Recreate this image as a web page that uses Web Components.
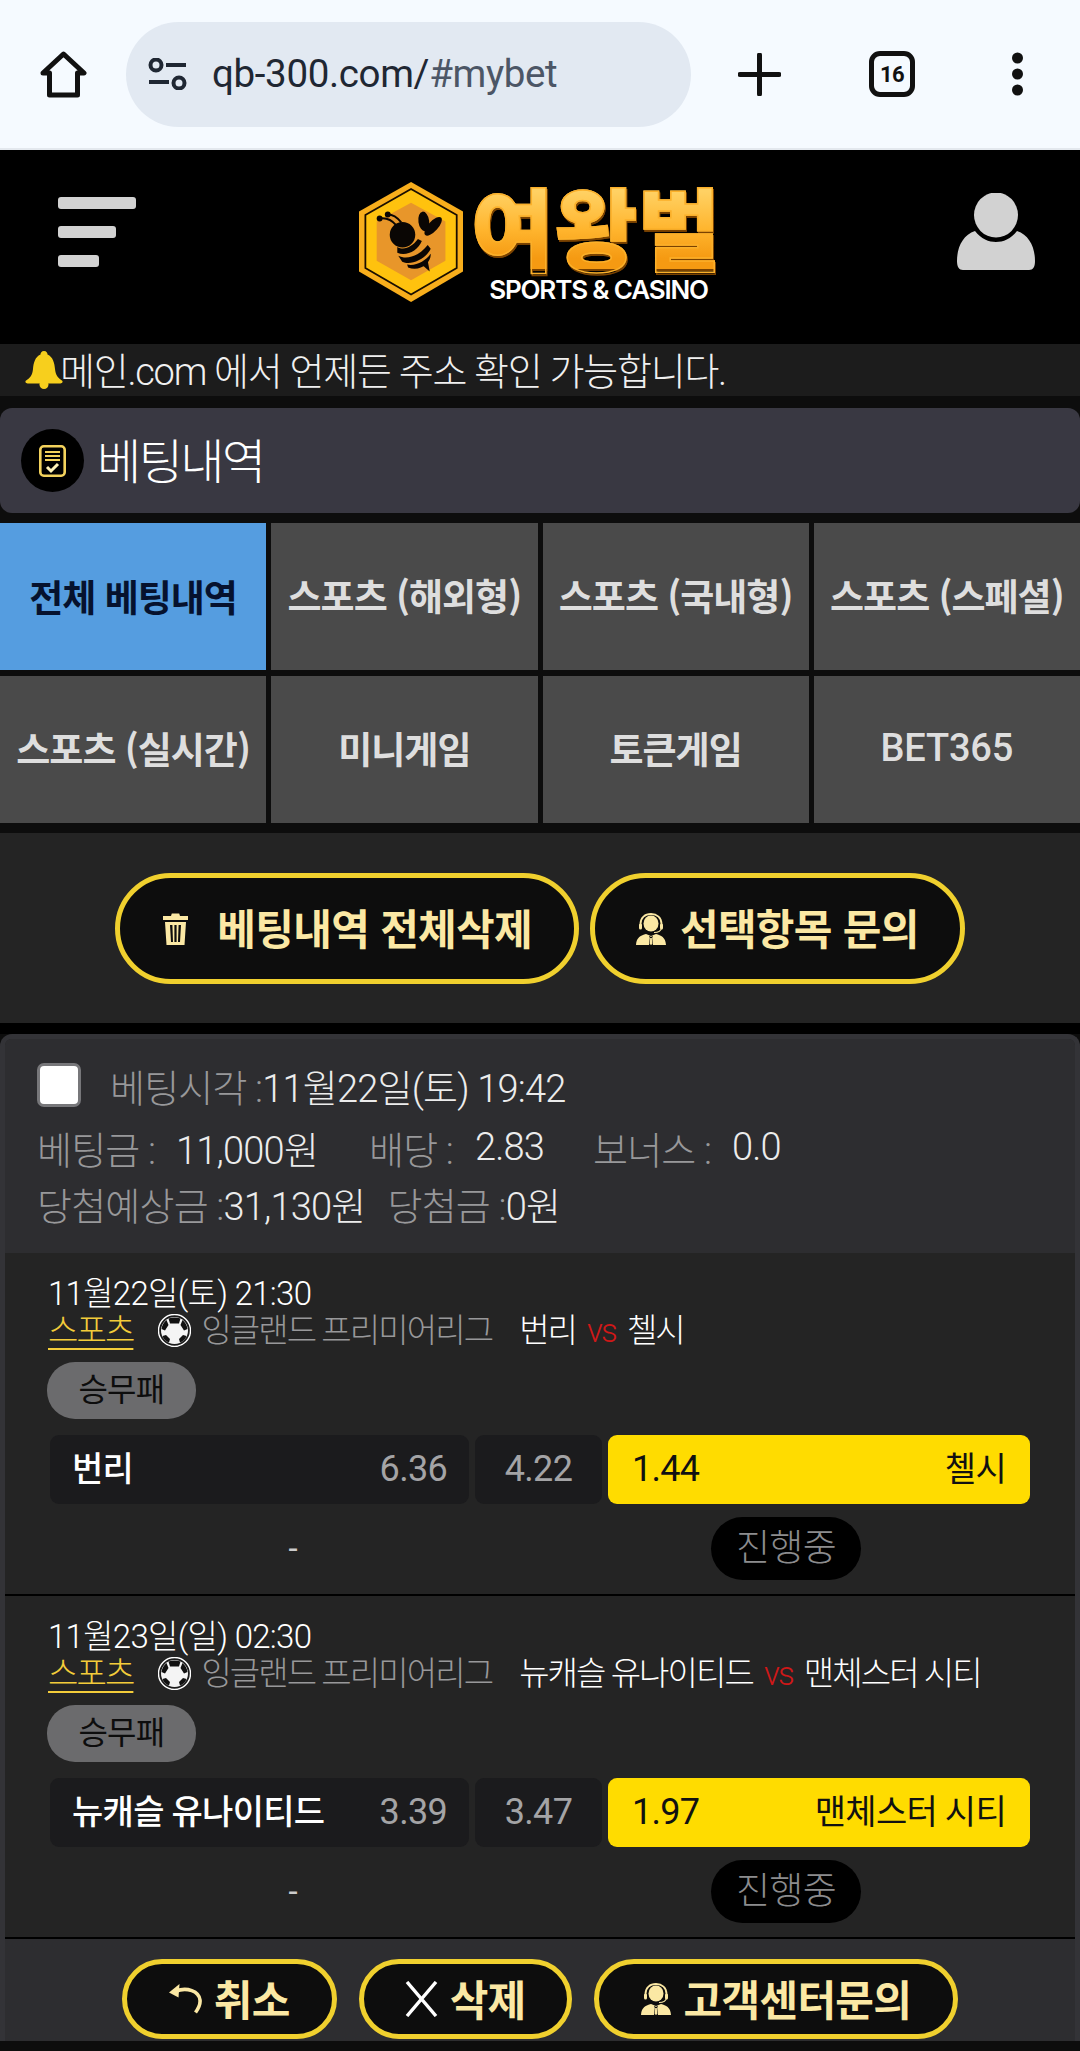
<!DOCTYPE html>
<html lang="ko">
<head>
<meta charset="utf-8">
<title>베팅내역</title>
<style>
  html, body { margin: 0; padding: 0; background: #0d0d0d; }
  body { width: 1080px; height: 2051px; overflow: hidden; font-family: Roboto, "Noto Sans CJK KR", sans-serif; }
</style>
</head>
<body>
<browser-bar url="qb-300.com/" hash="#mybet" tabs="16"></browser-bar>
<site-header></site-header>
<notice-bar>메인.com 에서 언제든 주소 확인 가능합니다.</notice-bar>
<page-title>베팅내역</page-title>
<bet-tabs></bet-tabs>
<action-panel>
  <action-button style="--gap:28px;--pad:42px" icon="trash">베팅내역 전체삭제</action-button>
  <action-button style="--gap:14px;--pad:41px" icon="agent">선택항목 문의</action-button>
</action-panel>
<bet-card>
  <bet-match date="11월22일(토) 21:30" home="번리" away="첼시" home-odds="6.36" draw="4.22" away-odds="1.44"></bet-match>
  <bet-match date="11월23일(일) 02:30" home="뉴캐슬 유나이티드" away="맨체스터 시티" home-odds="3.39" draw="3.47" away-odds="1.97"></bet-match>
  <action-button slot="footer" style="--gap:12px;--pad:42px" size="small" icon="undo">취소</action-button>
  <action-button slot="footer" style="--gap:12px;--pad:41px" size="small" icon="close">삭제</action-button>
  <action-button slot="footer" style="--gap:13px;--pad:42px" size="small" icon="agent">고객센터문의</action-button>
</bet-card>

<script>
const icons = {
  trash: `<svg width="27" height="32" viewBox="0 0 27 32" fill="currentColor"><path d="M9 3 L9.8 0.5 H17.2 L18 3 H26 V7 H1 V3 Z"/><path fill-rule="evenodd" d="M3 9 H24 L22.5 32 H4.5 Z M8 12 L9 29 H11 L10.4 12 Z M12.4 12 V29 H14.6 V12 Z M16.6 12 L16 29 H18 L19 12 Z"/></svg>`,
  agent: `<svg width="30" height="32" viewBox="0 0 30 32"><path d="M4.5 15 V11 C4.5 4.5 9 1 15 1 C21 1 25.500 4.5 25.500 11 V15" fill="none" stroke="currentColor" stroke-width="1.800"/><rect x="3" y="10.500" width="3" height="6" rx="1.500" fill="currentColor"/><rect x="24" y="10.500" width="3" height="6" rx="1.500" fill="currentColor"/><ellipse cx="15" cy="10.500" rx="7.500" ry="8" fill="currentColor"/><path d="M10 21 C5 22.500 0.500 24 0 32 H30 C29.500 24 25 22.500 20 21 L15 23 Z" fill="currentColor"/><path d="M13 22.500 L15 24 L17 22.500 L16.200 25 L17 32 H13 L13.800 25 Z" fill="#0d0d0d"/><path d="M14.200 25 H15.800 L16.300 31 L15 32 L13.700 31 Z" fill="currentColor"/><path d="M25.500 15 C25 18 22 19.500 18 19.500" fill="none" stroke="currentColor" stroke-width="1.200"/></svg>`,
  undo: `<svg width="33" height="30" viewBox="0 0 33 30" fill="none" stroke="currentColor" stroke-width="3.600"><path d="M7 7 C18 3 30 7 31 16 C31.500 20 29 25 26.500 28.500"/><path fill="currentColor" stroke="none" d="M0 8.500 L10.500 0 L9.500 13.500 Z"/></svg>`,
  close: `<svg width="33" height="36" viewBox="0 0 33 36" fill="none" stroke="#fff" stroke-width="3.4"><path d="M2 1 L31 35 M31 1 L2 35"/></svg>`
}

class BrowserBar extends HTMLElement {
  constructor(){
    super()
    this.attachShadow({ mode: "open" }).innerHTML = `
    <style>
      :host { display: flex; align-items: center; height: 150px; box-sizing: border-box; background: #f5faff; border-bottom: 2px solid #e3e8ee; }
      .home { margin-left: 40px; width: 47px; height: 47px; }
      .pill { margin-left: 39px; width: 565px; height: 105px; box-sizing: border-box; border-radius: 53px; background: #e2e9f2; display: flex; align-items: center; padding-left: 22px; flex: none; }
      .url { margin-left: 25px; padding-bottom: 1px; font: 400 38.500px Roboto, sans-serif; color: #1f2733; white-space: nowrap; letter-spacing: -.35px; }
      .url span { color: #4c5666; }
      .plus { margin-left: 47px; }
      .tabs { margin-left: 88px; width: 46px; height: 46px; box-sizing: border-box; border: 5px solid #111; border-radius: 11px; display: flex; align-items: center; justify-content: center; font: 700 22px Roboto, sans-serif; color: #111; letter-spacing: -.5px; }
      .more { margin-left: 97px; }
    </style>
    <svg class="home" viewBox="0 0 47 47" fill="none" stroke="#111" stroke-width="5" stroke-linejoin="round"><path d="M23.5 3 L44 22 H37.5 V44 H9.5 V22 H3 Z"/></svg>
    <div class="pill">
      <svg width="39" height="32" viewBox="0 0 39 32" fill="none" stroke="#1f2733" stroke-width="4"><circle cx="8" cy="7" r="5.5"/><path d="M18 7 H38 M1 24 H21"/><circle cx="31" cy="25" r="5.5"/></svg>
      <div class="url">${this.getAttribute("url")}<span>${this.getAttribute("hash")}</span></div>
    </div>
    <svg class="plus" width="43" height="43" viewBox="0 0 43 43" stroke="#111" stroke-width="5" stroke-linecap="round"><path d="M21.5 2 V41 M2 21.5 H41"/></svg>
    <div class="tabs">${this.getAttribute("tabs")}</div>
    <svg class="more" width="11" height="44" viewBox="0 0 11 44" fill="#111"><circle cx="5.5" cy="6" r="5.5"/><circle cx="5.5" cy="22" r="5.5"/><circle cx="5.5" cy="38" r="5.5"/></svg>`
  }
}
customElements.define("browser-bar", BrowserBar)

class SiteHeader extends HTMLElement {
  constructor(){
    super()
    this.attachShadow({ mode: "open" }).innerHTML = `
    <style>
      :host { display: flex; align-items: flex-start; height: 194px; background: #000; box-sizing: border-box; }
      .menu { margin: 47px 0 0 58px; width: 78px; display: flex; flex-direction: column; gap: 17px; }
      .menu i { display: block; height: 12px; background: #d2d2d2; border-radius: 3px; }
      .logo { margin: 31px 0 0 223px; display: flex; gap: 8px; width: 362px; }
      .word { display: flex; flex-direction: column; align-items: center; width: 250px; }
      .name { font: 900 90px/88px "Noto Sans CJK KR", sans-serif; letter-spacing: .5px; height: 88px; white-space: nowrap;
        background: linear-gradient(#ffd163 12%, #ffb52e 55%, #f59a12 88%); -webkit-background-clip: text; background-clip: text; color: transparent;
        -webkit-text-stroke: 1.5px #fbb02a; filter: drop-shadow(1px 2px 0 #7a4200); }
      .sub { font: 600 26px/26px Inter, sans-serif; color: #fff; letter-spacing: -1.15px; white-space: nowrap; margin: 8px 0 0 5px; }
      .user { margin: 43px 0 0 236px; }
    </style>
    <div class="menu"><i></i><i style="width:58px"></i><i style="width:41px"></i></div>
    <div class="logo">
      <svg width="106" height="122" viewBox="0 0 106 122">
        <path d="M53 0 L106 30 V91 L53 122 L0 91 V30 Z" fill="#f8ae1c"/>
        <path d="M53 7 L99.500 33.500 V87.500 L53 114.500 L6.500 87.500 V33.500 Z" fill="#ffc20e" stroke="#1a0e00" stroke-width="1.800"/>
        <path d="M53 21 L88 40 V80 L53 100 L18 80 V40 Z" fill="#e8962a"/>
        <g fill="#0a0604">
          <circle cx="44.300" cy="53.700" r="13"/>
          <ellipse cx="66" cy="40" rx="5.500" ry="10" transform="rotate(-8 66 40)"/>
          <ellipse cx="75.500" cy="45" rx="5" ry="12" transform="rotate(42 75.500 45)"/>
          <circle cx="21" cy="37" r="3"/><circle cx="29.300" cy="33" r="3"/>
          <path d="M39 66 C46 70 54 66 60 58 L64 60 C60 70 48 76 39 72 Z"/>
          <path d="M40 75 C50 80 62 74 70 64 L73 68 C70 76 54 86 44 81 Z"/>
          <path d="M49 84 C58 86 68 80 73 73 C74 82 62 92 50 87 Z"/>
          <path d="M65 85 L72 91 L70 80 Z"/>
        </g>
        <path d="M21 37 C27 36 33 38 38 44 M29.300 33 C35 33 39 36 43 41" stroke="#0a0604" stroke-width="2" fill="none"/>
      </svg>
      <div class="word"><div class="name">여왕벌</div><div class="sub">SPORTS &amp; CASINO</div></div>
    </div>
    <svg class="user" width="78" height="77" viewBox="0 0 78 77" fill="#d2d2d2"><ellipse cx="39" cy="22" rx="22" ry="22.5"/><path d="M18 38 C24 46 32 49 39 49 C46 49 54 46 60 38 C72 42 78 54 78 68 C78 74 76 77 72 77 H6 C2 77 0 74 0 68 C0 54 6 42 18 38 Z"/></svg>`
  }
}
customElements.define("site-header", SiteHeader)

class NoticeBar extends HTMLElement {
  constructor(){
    super()
    this.attachShadow({ mode: "open" }).innerHTML = `
    <style>
      :host { display: flex; align-items: center; height: 52px; box-sizing: border-box; padding: 0 0 3px 25px; background: #1c1c1c; margin-bottom: 12px; font: 300 38px Roboto, "Noto Sans CJK KR", sans-serif; color: #f0f0f0; white-space: nowrap; letter-spacing: -1.25px; }
      svg { flex: none; margin: 3px -3px 0 0; }
    </style>
    <svg width="38" height="38" viewBox="0 0 38 38" fill="#f7cf1d"><path d="M19 0 C21.5 0 22.5 2 22.5 3.5 C28 6 29.5 12 30 18 C30.5 24 33 27 37.5 30 C38 32 36 32.5 34 32.5 H4 C2 32.5 0 32 0.5 30 C5 27 7.5 24 8 18 C8.5 12 10 6 15.5 3.5 C15.5 2 16.5 0 19 0 Z"/><circle cx="19" cy="33.5" r="4.5"/></svg>
    <slot></slot>`
  }
}
customElements.define("notice-bar", NoticeBar)

class PageTitle extends HTMLElement {
  constructor(){
    super()
    this.attachShadow({ mode: "open" }).innerHTML = `
    <style>
      :host { display: flex; align-items: center; height: 105px; box-sizing: border-box; background: #393842; border-radius: 12px; padding-left: 21px; margin-bottom: 10px; font: 300 48px Roboto, "Noto Sans CJK KR", sans-serif; color: #fff; letter-spacing: -2.5px; }
      .badge { width: 63px; height: 63px; border-radius: 50%; background: #000; display: flex; align-items: center; justify-content: center; margin-right: 13px; }
      .text { padding-bottom: 5px; }
    </style>
    <div class="badge">
      <svg width="27" height="32" viewBox="0 0 27 32" fill="none" stroke="#f3d25c" stroke-width="2.6"><rect x="1.3" y="1.3" width="24.4" height="29.4" rx="3.5"/><path d="M6 7 H21 M6 11 H21 M6 15 H21" stroke-width="2"/><path d="M8 22 L12 26 L19 19" stroke-width="3" stroke="#fff3b8"/></svg>
    </div>
    <div class="text"><slot></slot></div>`
  }
}
customElements.define("page-title", PageTitle)

class BetTabs extends HTMLElement {
  constructor(){
    super()
    const names = ["전체 베팅내역", "스포츠 (해외형)", "스포츠 (국내형)", "스포츠 (스페셜)", "스포츠 (실시간)", "미니게임", "토큰게임", "BET365"]
    this.attachShadow({ mode: "open" }).innerHTML = `
    <style>
      :host { display: grid; grid-template-columns: repeat(4, 1fr); grid-auto-rows: 147px; gap: 6px 5px; margin-bottom: 10px; font: 700 37px "Noto Sans CJK KR", sans-serif; color: #dedede; }
      div { background: #4a4a4a; display: flex; align-items: center; justify-content: center; white-space: nowrap; letter-spacing: -1px; padding-bottom: 4px; box-sizing: border-box; }
      .on { background: #559de0; color: #06122e; padding-bottom: 2px; }
      .latin { font-family: Roboto, sans-serif; font-weight: 500; font-size: 38px; letter-spacing: -.2px; padding-bottom: 3px; }
    </style>
    ${names.map((n, i) => `<div class="${i == 0 ? "on" : i == 7 ? "latin" : ""}">${n}</div>`).join("")}`
  }
}
customElements.define("bet-tabs", BetTabs)

class ActionPanel extends HTMLElement {
  constructor(){
    super()
    this.attachShadow({ mode: "open" }).innerHTML = `
    <style>
      :host { display: flex; justify-content: center; gap: 11px; box-sizing: border-box; height: 201px; padding-top: 40px; background: #242424; border-bottom: 11px solid #000; }
    </style>
    <slot></slot>`
  }
}
customElements.define("action-panel", ActionPanel)

class ActionButton extends HTMLElement {
  constructor(){
    super()
    const small = this.getAttribute("size") == "small"
    this.attachShadow({ mode: "open" }).innerHTML = `
    <style>
      :host { display: inline-flex; align-items: center; gap: var(--gap, 14px); box-sizing: border-box; height: ${small ? 80 : 111}px; padding: 0 var(--pad, 43px); border: 5px solid #f0d02e; border-radius: 56px; background: #0d0d0d; color: #fbe8a4; font: 700 42px "Noto Sans CJK KR", sans-serif; white-space: nowrap; letter-spacing: -.7px; }
      svg { display: block; flex: none; }
      .text { padding-bottom: 4px; }
    </style>
    ${icons[this.getAttribute("icon")]}
    <div class="text"><slot></slot></div>`
  }
}
customElements.define("action-button", ActionButton)

class BetCard extends HTMLElement {
  constructor(){
    super()
    this.attachShadow({ mode: "open" }).innerHTML = `
    <style>
      :host { display: block; box-sizing: border-box; border: 5px solid #333337; border-bottom: 0; border-radius: 12px 12px 0 0; background: #242424; font: 300 38px Roboto, "Noto Sans CJK KR", sans-serif; color: #ececec; letter-spacing: -.8px; }
      .head { background: #2d2d30; height: 214px; box-sizing: border-box; padding: 24px 0 0 32px; border-radius: 6px 6px 0 0; }
      .row { display: flex; align-items: center; height: 56px; white-space: nowrap; }
      .row.first { height: 44px; margin-bottom: 12px; }
      .box { width: 44px; height: 44px; box-sizing: border-box; background: #fff; border: 3px solid #77777a; border-radius: 7px; margin-right: 29px; }
      .k { color: #98989a; }
      .foot { display: flex; justify-content: center; gap: 22px; height: 102px; box-sizing: border-box; padding-top: 20px; background: #2d2d30; }
    </style>
    <div class="head">
      <div class="row first"><div class="box"></div><span class="k">베팅시각 :</span>11월22일(토) 19:42</div>
      <div class="row"><span class="k" style="width:139px">베팅금 :</span><span style="width:193px">11,000원</span><span class="k" style="width:106px">배당 :</span><span style="width:118px">2.83</span><span class="k" style="width:139px">보너스 :</span><span>0.0</span></div>
      <div class="row"><span class="k">당첨예상금 :</span><span style="margin-right:22px">31,130원</span><span class="k">당첨금 :</span>0원</div>
    </div>
    <slot></slot>
    <div class="foot"><slot name="footer"></slot></div>`
  }
}
customElements.define("bet-card", BetCard)

class BetMatch extends HTMLElement {
  constructor(){
    super()
    const a = n => this.getAttribute(n)
    this.attachShadow({ mode: "open" }).innerHTML = `
    <style>
      :host { display: block; box-sizing: border-box; padding: 23px 0 14px 0; border-bottom: 2px solid #000; font: 300 33px/35px Roboto, "Noto Sans CJK KR", sans-serif; color: #fff; letter-spacing: -.7px; }
      .date, .info { padding-left: 43px; white-space: nowrap; }
      .info { display: flex; align-items: center; height: 38px; letter-spacing: -1.9px; }
      .sport { color: #f3cc3a; text-decoration: underline; text-underline-offset: 6px; text-decoration-thickness: 2px; margin-right: 25px; }
      .info svg { margin-right: 10px; flex: none; }
      .league { color: #98989a; margin-right: 27px; }
      .vs { color: #d01818; margin: 0 11px; }
      .type { display: flex; align-items: center; justify-content: center; width: 149px; height: 57px; margin: 13px 0 16px 42px; border-radius: 28px; background: #6b6b6d; color: #0d0d0d; font-size: 32px; font-weight: 400; }
      .odds { display: grid; grid-template-columns: 419px 127px 422px; gap: 6px; margin-left: 45px; height: 69px; }
      .cell { display: flex; align-items: center; justify-content: space-between; background: #1b1b1d; border-radius: 9px; padding: 0 22px; font-size: 36px; font-weight: 400; color: #a4a4a6; white-space: nowrap; }
      .cell b { font-weight: 400; color: #fff; font-size: 34px; }
      .mid { justify-content: center; padding: 0; }
      .sel { background: #ffdc00; color: #111; padding-right: 24px; padding-left: 24px; }
      .sel b { color: #111; font-weight: 400; }
      .state { display: flex; align-items: center; margin-top: 13px; height: 63px; }
      .dash { width: 292px; text-align: right; color: #ccc; font-weight: 400; }
      .pill { margin-left: 414px; width: 150px; height: 63px; border-radius: 32px; background: #000; color: #8c8c8e; font-size: 37px; display: flex; align-items: center; justify-content: center; }
    </style>
    <div class="date">${a("date")}</div>
    <div class="info"><span class="sport">스포츠</span>
      <svg width="33" height="33" viewBox="0 0 33 33"><circle cx="16.500" cy="16.500" r="16" fill="#1c1c1c" stroke="#fff" stroke-width="1.400"/><circle cx="16.500" cy="16.500" r="13.500" fill="#f4f4f4"/><path fill="#111" d="M10.500 4.500 C14 3 19 3 22.500 4.500 L21 9.500 H12 Z M3.500 15 C4 11 6 8 8.500 6 L10.500 11 L7 16.500 Z M29.500 15 C29 11 27 8 24.500 6 L22.500 11 L26 16.500 Z M8 21 L12 25 L11 28.500 C8 27.500 5.500 25 4.500 22 Z M25 21 L21 25 L22 28.500 C25 27.500 27.500 25 28.500 22 Z"/></svg>
      <span class="league">잉글랜드 프리미어리그</span>${a("home")}<span class="vs">vs</span>${a("away")}</div>
    <div class="type">승무패</div>
    <div class="odds">
      <div class="cell"><b style="font-weight:500">${a("home")}</b>${a("home-odds")}</div>
      <div class="cell mid">${a("draw")}</div>
      <div class="cell sel">${a("away-odds")}<b>${a("away")}</b></div>
    </div>
    <div class="state"><div class="dash">-</div><div class="pill">진행중</div></div>`
  }
}
customElements.define("bet-match", BetMatch)
</script>
</body>
</html>
